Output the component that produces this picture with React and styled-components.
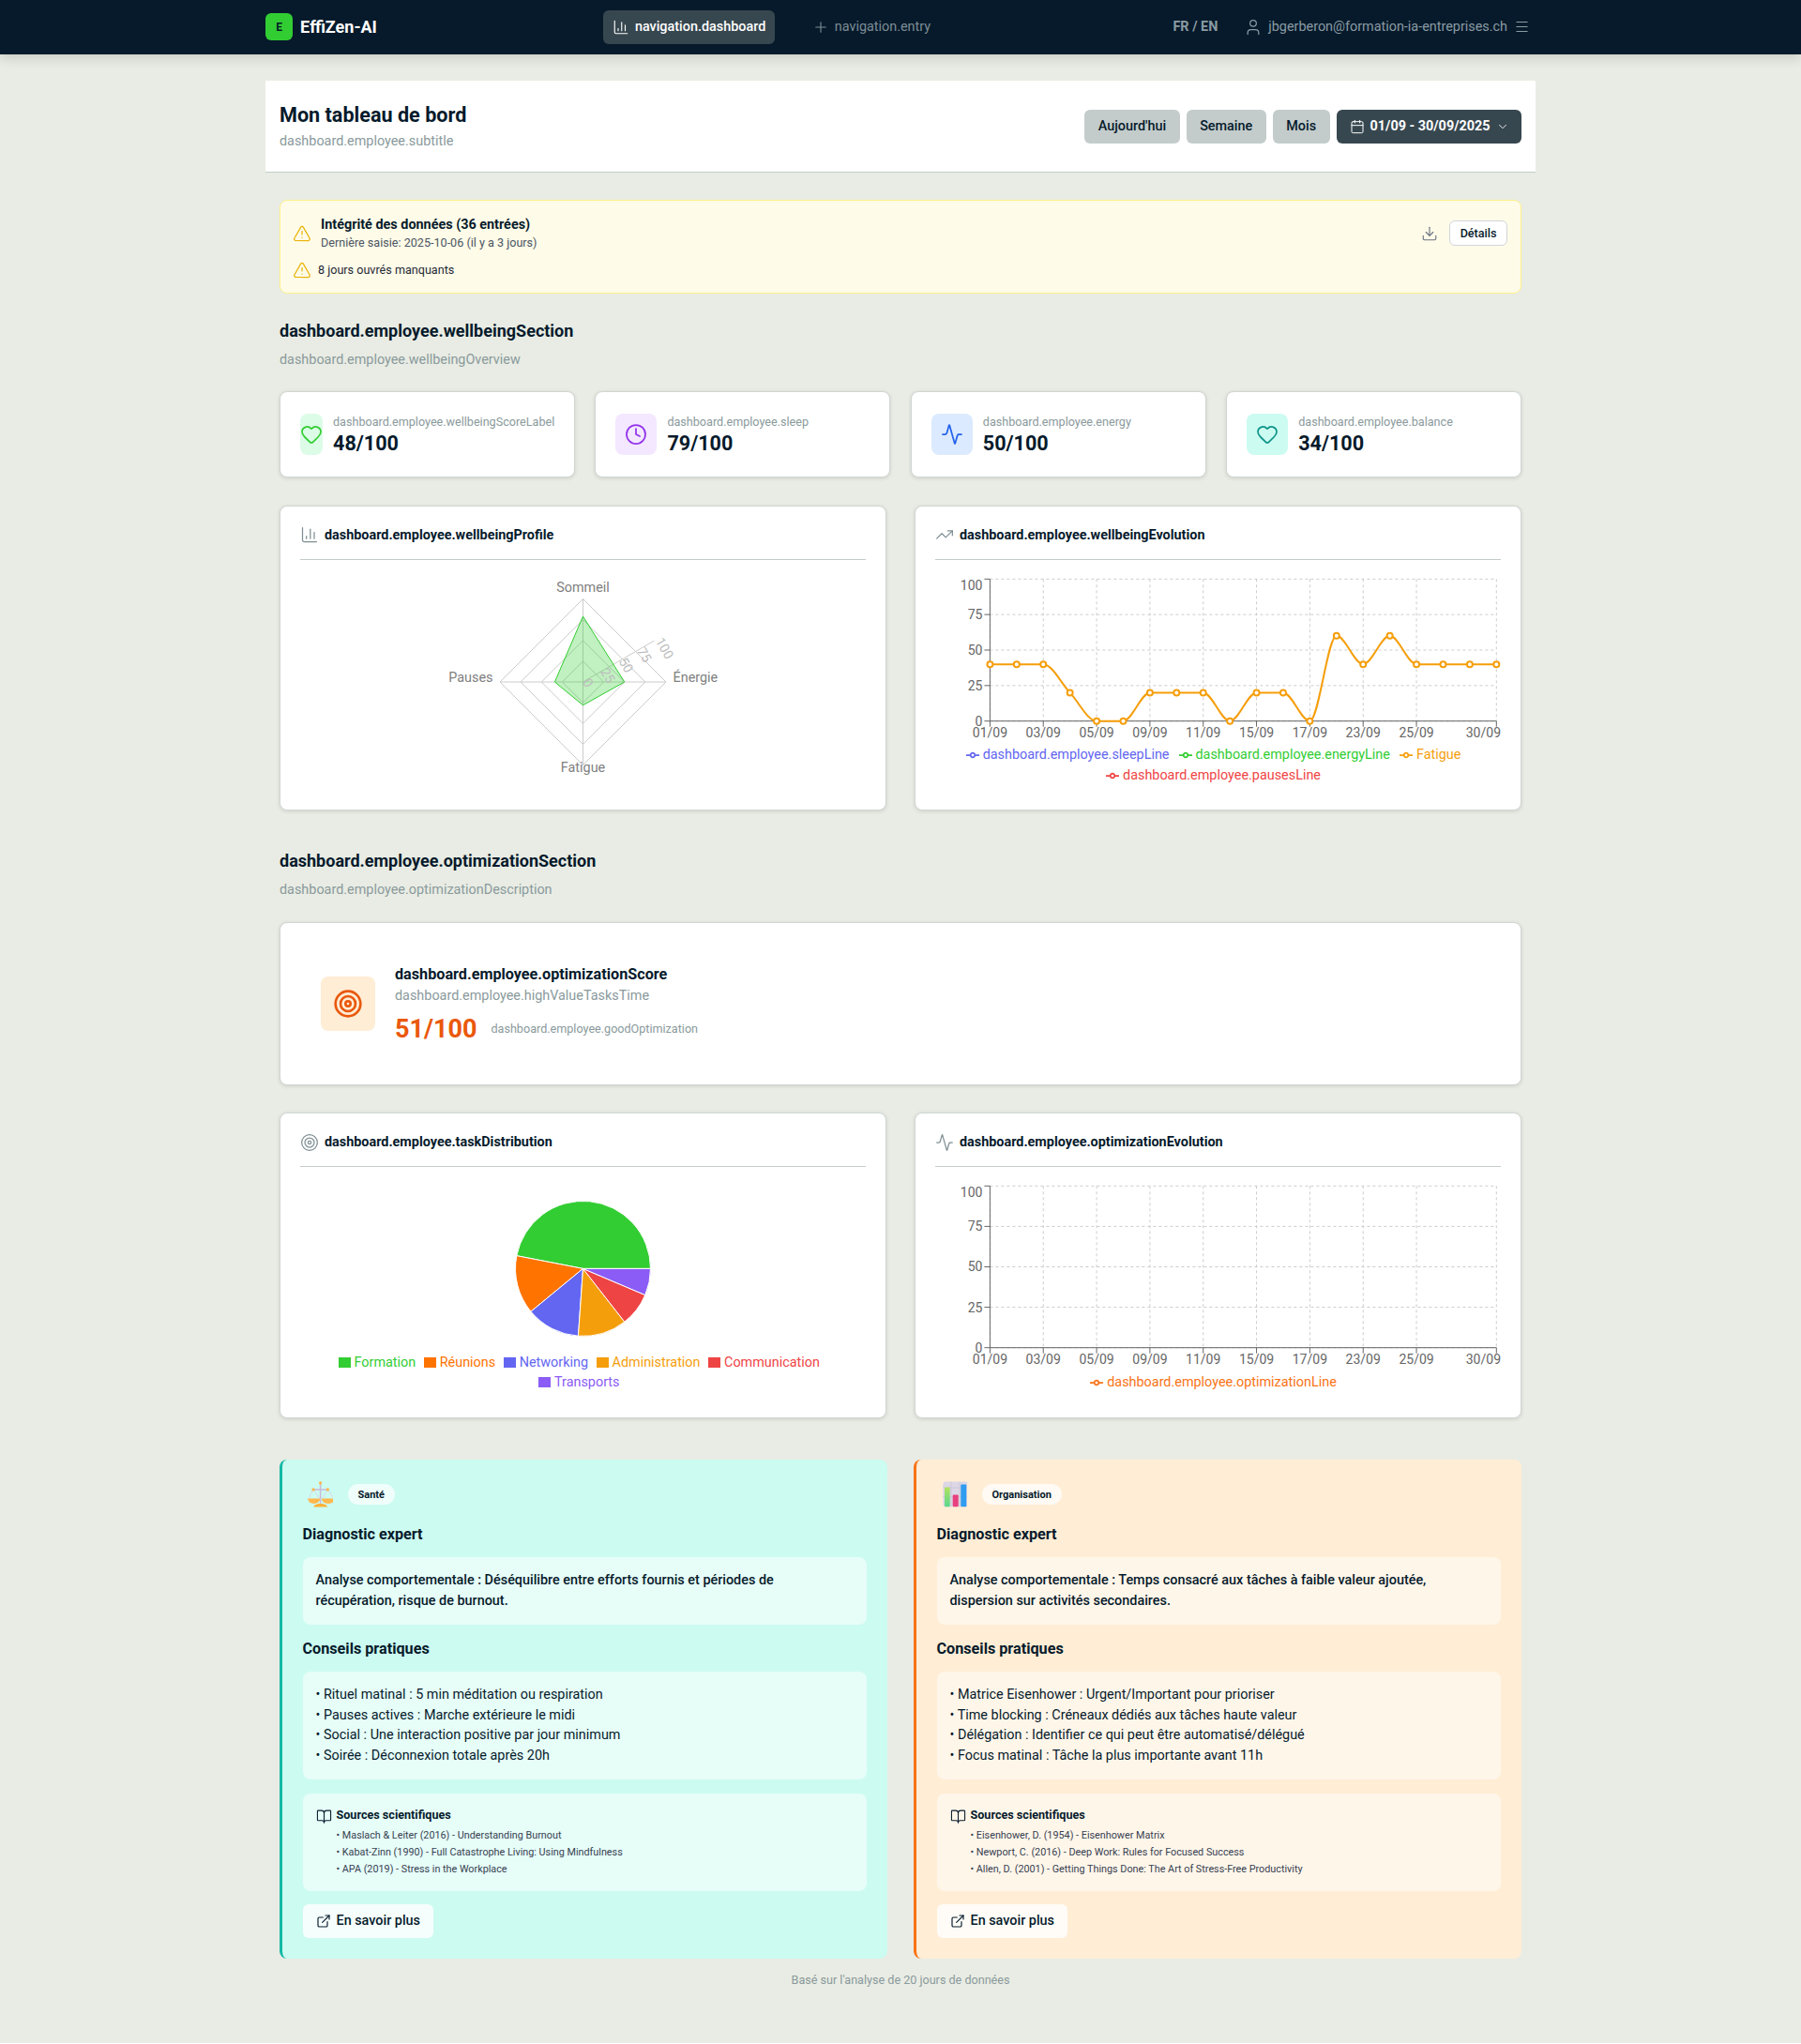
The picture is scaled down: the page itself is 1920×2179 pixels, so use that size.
import React from 'react';
import styled, { createGlobalStyle } from 'styled-components';
import {
  Activity,
  BookOpen,
  Calendar,
  ChartColumn,
  ChevronDown,
  Clock,
  Download,
  ExternalLink,
  Heart,
  Menu,
  Plus,
  Target,
  TrendingUp,
  TriangleAlert,
  User,
} from 'lucide-react';

const ink = '#061a2b';
const muted = '#8a9a9c';
const slate = '#37474f';
const line = '#c3cccb';

const dates = ['01/09', '03/09', '05/09', '09/09', '11/09', '15/09', '17/09', '23/09', '25/09', '30/09'];
const fatigue = [40, 40, 40, 20, 0, 0, 20, 20, 20, 0, 20, 20, 0, 60, 40, 60, 40, 40, 40, 40];

const tasks = [
  { name: 'Formation', color: '#32cd32', from: 0, to: 169 },
  { name: 'Réunions', color: '#ff7300', from: 169, to: 219.5 },
  { name: 'Networking', color: '#6366f1', from: 219.5, to: 266 },
  { name: 'Administration', color: '#f59e0b', from: 266, to: 308 },
  { name: 'Communication', color: '#ef4444', from: 308, to: 337 },
  { name: 'Transports', color: '#8b5cf6', from: 337, to: 360 },
];

const kpis = [
  { label: 'dashboard.employee.wellbeingScoreLabel', value: '48/100', Icon: Heart, bg: '#dcfce7', fg: '#32cd32' },
  { label: 'dashboard.employee.sleep', value: '79/100', Icon: Clock, bg: '#f3e8ff', fg: '#9333ea' },
  { label: 'dashboard.employee.energy', value: '50/100', Icon: Activity, bg: '#dbeafe', fg: '#2563eb' },
  { label: 'dashboard.employee.balance', value: '34/100', Icon: Heart, bg: '#ccfbf1', fg: '#0d9488' },
];

function ScalesGlyph() {
  return (
    <svg width="28" height="28" viewBox="6 5.5 28 28" aria-hidden="true">
      <path d="M20.6 8v22" stroke="#c9bdd9" strokeWidth="1.6" />
      <path d="M13 14.5h15.5" stroke="#c9bdd9" strokeWidth="1.6" />
      <path d="M13 14.5 8 24M13 14.5 19.5 24M28.5 14.5 22.5 24M28.5 14.5 35 24" stroke="#d8cfe3" strokeWidth="0.8" fill="none" />
      <circle cx="20.6" cy="7.4" r="1.6" fill="#fdb64a" />
      <circle cx="13" cy="14.4" r="1.6" fill="#fdb64a" />
      <circle cx="28.4" cy="14.4" r="1.6" fill="#fdb64a" />
      <path d="M7.3 24h12.8c0 3.4-2.8 5.4-6.4 5.4S7.3 27.4 7.3 24Z" fill="#ffb84d" />
      <path d="M22 24h14c0 3.4-3 5.4-7 5.4S22 27.4 22 24Z" fill="#ffb84d" />
      <path d="M13.4 33c0-2.4 3.4-3.6 7.2-3.6s7.4 1.2 7.4 3.6Z" fill="#fdb136" />
    </svg>
  );
}

function BarsGlyph() {
  return (
    <svg width="28" height="28" viewBox="6 5.5 28 28" aria-hidden="true">
      <defs>
        <linearGradient id="bar-green" x1="0" y1="0" x2="0" y2="1">
          <stop offset="0" stopColor="#b3e35f" />
          <stop offset="1" stopColor="#58d68d" />
        </linearGradient>
      </defs>
      <rect x="8.3" y="6" width="26.7" height="26.7" rx="3" fill="#dcd7e6" />
      <path d="M16.9 6v26.7M26 6v26.7M8.3 12.5H35M8.3 22h26.7" stroke="#c9c4d4" strokeWidth="0.8" />
      <rect x="10" y="12" width="5.7" height="20.7" rx="1" fill="url(#bar-green)" />
      <rect x="18.7" y="20" width="6" height="12.7" rx="1" fill="#e93f7f" />
      <rect x="27.3" y="9" width="6" height="23.7" rx="1" fill="#2f9cf0" />
    </svg>
  );
}

const advice = [
  {
    Glyph: ScalesGlyph,
    tag: 'Santé',
    bg: '#ccfbf1',
    accent: '#14b8a6',
    diagnostic: 'Analyse comportementale : Déséquilibre entre efforts fournis et périodes de récupération, risque de burnout.',
    tips: [
      'Rituel matinal : 5 min méditation ou respiration',
      'Pauses actives : Marche extérieure le midi',
      'Social : Une interaction positive par jour minimum',
      'Soirée : Déconnexion totale après 20h',
    ],
    sources: [
      'Maslach & Leiter (2016) - Understanding Burnout',
      'Kabat-Zinn (1990) - Full Catastrophe Living: Using Mindfulness',
      'APA (2019) - Stress in the Workplace',
    ],
  },
  {
    Glyph: BarsGlyph,
    tag: 'Organisation',
    bg: '#ffedd5',
    accent: '#f97316',
    diagnostic: 'Analyse comportementale : Temps consacré aux tâches à faible valeur ajoutée, dispersion sur activités secondaires.',
    tips: [
      'Matrice Eisenhower : Urgent/Important pour prioriser',
      'Time blocking : Créneaux dédiés aux tâches haute valeur',
      'Délégation : Identifier ce qui peut être automatisé/délégué',
      'Focus matinal : Tâche la plus importante avant 11h',
    ],
    sources: [
      'Eisenhower, D. (1954) - Eisenhower Matrix',
      'Newport, C. (2016) - Deep Work: Rules for Focused Success',
      'Allen, D. (2001) - Getting Things Done: The Art of Stress-Free Productivity',
    ],
  },
];

// same curve as d3 curveMonotoneX
function monotonePath(points) {
  const n = points.length;
  const slopes = [];
  const tangents = [];
  for (let i = 0; i < n - 1; i++) {
    slopes.push((points[i + 1][1] - points[i][1]) / (points[i + 1][0] - points[i][0]));
  }
  tangents[0] = slopes[0];
  tangents[n - 1] = slopes[n - 2];
  for (let i = 1; i < n - 1; i++) {
    const a = slopes[i - 1];
    const b = slopes[i];
    tangents[i] = a * b <= 0 ? 0 : (2 * a * b) / (a + b);
  }
  let d = `M${points[0][0]},${points[0][1]}`;
  for (let i = 0; i < n - 1; i++) {
    const h = (points[i + 1][0] - points[i][0]) / 3;
    d += `C${points[i][0] + h},${points[i][1] + h * tangents[i]},${points[i + 1][0] - h},${points[i + 1][1] - h * tangents[i + 1]},${points[i + 1][0]},${points[i + 1][1]}`;
  }
  return d;
}

function LineChart({ height, plotBottom, data, color }) {
  const left = 58.4;
  const right = 598.3;
  const top = 5.3;
  const step = (right - left) / 19;
  const indexes = [0, 2, 4, 6, 8, 10, 12, 14, 16, 19];
  const yOf = (v) => plotBottom - (v / 100) * (plotBottom - top);
  const points = data ? data.map((v, i) => [left + i * step, yOf(v)]) : [];

  return (
    <svg width="603" height={height} style={{ display: 'block' }}>
      <g stroke="#ccc" strokeDasharray="3 3">
        {[0, 25, 50, 75, 100].map((v) => (
          <line key={v} x1={left} x2={right} y1={yOf(v)} y2={yOf(v)} />
        ))}
        {indexes.map((i) => (
          <line key={i} x1={left + i * step} x2={left + i * step} y1={top} y2={plotBottom} />
        ))}
      </g>
      <g stroke="#666">
        <line x1={left} x2={left} y1={top} y2={plotBottom} />
        <line x1={left} x2={right} y1={plotBottom} y2={plotBottom} />
        {[0, 25, 50, 75, 100].map((v) => (
          <line key={v} x1={left - 6} x2={left} y1={yOf(v)} y2={yOf(v)} />
        ))}
        {indexes.map((i) => (
          <line key={i} x1={left + i * step} x2={left + i * step} y1={plotBottom} y2={plotBottom + 6} />
        ))}
      </g>
      <g fill="#666" fontSize="14" fontFamily="Roboto, sans-serif">
        {[0, 25, 50, 75, 100].map((v) => (
          <text key={v} x={left - 8} y={yOf(v) + (v === 100 ? 6.5 : 0)} dy="0.355em" textAnchor="end">
            {v}
          </text>
        ))}
        {indexes.map((i, k) => (
          <text
            key={i}
            x={k === indexes.length - 1 ? 603 : left + i * step}
            y={plotBottom + 12.5}
            dy="0.355em"
            textAnchor={k === indexes.length - 1 ? 'end' : 'middle'}
          >
            {dates[k]}
          </text>
        ))}
      </g>
      {data && (
        <g>
          <path d={monotonePath(points)} fill="none" stroke={color} strokeWidth="2" />
          {points.map(([x, y]) => (
            <circle key={x} cx={x} cy={y} r="3" fill="#fff" stroke={color} strokeWidth="2" />
          ))}
        </g>
      )}
    </svg>
  );
}

function RadarChart() {
  const cx = 301.5;
  const cy = 115;
  const axes = [
    [0, -1],
    [1, 0],
    [0, 1],
    [-1, 0],
  ];
  const poly = (values) => axes.map(([x, y], i) => `${cx + x * values[i]},${cy + y * values[i]}`).join(' ');
  const shape = poly([79 * 0.885, 50 * 0.885, 28 * 0.885, 34 * 0.885]);
  const ticks = [
    { t: 0, x: 307, y: 116 },
    { t: 25, x: 328, y: 108 },
    { t: 50, x: 347.5, y: 97 },
    { t: 75, x: 367, y: 86 },
    { t: 100, x: 388.6, y: 79 },
  ];

  return (
    <svg width="603" height="230" style={{ display: 'block' }}>
      <g fill="none" stroke="#ccc">
        {[22.1, 44.2, 66.4, 88.5].map((r) => (
          <polygon key={r} points={poly([r, r, r, r])} />
        ))}
        {axes.map(([x, y]) => (
          <line key={`${x}${y}`} x1={cx} y1={cy} x2={cx + x * 88.5} y2={cy + y * 88.5} />
        ))}
      </g>
      <line x1={cx} y1={cy} x2={cx + 76} y2={cy - 44} stroke="#ccc" />
      <polygon points={shape} fill="#32cd32" fillOpacity="0.3" stroke="#32cd32" />
      <g fill="#bdbdbd" fontSize="14" fontFamily="Roboto, sans-serif" textAnchor="middle">
        {ticks.map(({ t, x, y }) => (
          <text key={t} x={x} y={y} dy="0.355em" transform={`rotate(60 ${x} ${y})`}>
            {t}
          </text>
        ))}
      </g>
      <g fill="#808080" fontSize="14.4" fontFamily="Roboto, sans-serif">
        <text x={cx} y={cy - 101} dy="0.355em" textAnchor="middle">Sommeil</text>
        <text x={cx + 96} y={cy - 5} dy="0.355em">Énergie</text>
        <text x={cx} y={cy + 91} dy="0.355em" textAnchor="middle">Fatigue</text>
        <text x={cx - 96} y={cy - 5} dy="0.355em" textAnchor="end">Pauses</text>
      </g>
    </svg>
  );
}

function PieChart() {
  const cx = 301.5;
  const cy = 93.4;
  const r = 72;
  const at = (deg) => [cx + r * Math.cos((deg * Math.PI) / 180), cy - r * Math.sin((deg * Math.PI) / 180)];

  return (
    <svg width="603" height="183" style={{ display: 'block' }}>
      {tasks.map((t) => {
        const [x1, y1] = at(t.from);
        const [x2, y2] = at(t.to);
        const large = t.to - t.from > 180 ? 1 : 0;
        return (
          <path
            key={t.name}
            d={`M${cx},${cy}L${x1},${y1}A${r},${r},0,${large},0,${x2},${y2}Z`}
            fill={t.color}
            stroke="#fff"
          />
        );
      })}
    </svg>
  );
}

function LineGlyph({ color }) {
  return (
    <svg width="14" height="14" viewBox="0 0 32 32">
      <path
        d="M0,16h10.67A5.33,5.33,0,1,1,21.33,16H32M21.33,16A5.33,5.33,0,1,1,10.67,16"
        fill="none"
        stroke={color}
        strokeWidth="4"
      />
    </svg>
  );
}

function Legend({ items, square, row }) {
  return (
    <LegendRow $row={row}>
      {items.map((item) => (
        <LegendItem key={item.name} $color={item.color} $square={square}>
          {square ? <LegendSquare $color={item.color} /> : <LineGlyph color={item.color} />}
          {item.name}
        </LegendItem>
      ))}
    </LegendRow>
  );
}

function ChartCard({ Icon, title, children }) {
  return (
    <Card>
      <CardTitle>
        <Icon size={20} color="#7f8f94" strokeWidth={1.5} />
        {title}
      </CardTitle>
      <ChartBody>{children}</ChartBody>
    </Card>
  );
}

export default function App() {
  return (
    <>
      <GlobalStyle />
      <Header>
        <Brand>
          <BrandMark>E</BrandMark>
          EffiZen-AI
        </Brand>
        <Nav>
          <NavItem $active>
            <ChartColumn size={18} strokeWidth={1.5} />
            navigation.dashboard
          </NavItem>
          <NavItem>
            <Plus size={18} strokeWidth={1.5} />
            navigation.entry
          </NavItem>
        </Nav>
        <HeaderRight>
          <Lang>FR / EN</Lang>
          <UserBlock>
            <User size={20} strokeWidth={1.5} />
            jbgerberon@formation-ia-entreprises.ch
          </UserBlock>
          <Menu size={17} color="#8a9ba3" strokeWidth={1.5} />
        </HeaderRight>
      </Header>

      <Page>
        <TitleBar>
          <div>
            <PageTitle>Mon tableau de bord</PageTitle>
            <PageSubtitle>dashboard.employee.subtitle</PageSubtitle>
          </div>
          <PeriodGroup>
            <PeriodButton>Aujourd'hui</PeriodButton>
            <PeriodButton>Semaine</PeriodButton>
            <PeriodButton>Mois</PeriodButton>
            <DateButton>
              <Calendar size={16} strokeWidth={1.5} />
              <span>01/09 - 30/09/2025</span>
              <ChevronDown size={14} strokeWidth={1.5} />
            </DateButton>
          </PeriodGroup>
        </TitleBar>

        <Content>
          <Alert>
            <AlertMain>
              <AlertHead>
                <TriangleAlert size={20} color="#eab308" strokeWidth={1.5} />
                <div>
                  <AlertTitle>Intégrité des données (36 entrées)</AlertTitle>
                  <AlertMeta>Dernière saisie: 2025-10-06 (il y a 3 jours)</AlertMeta>
                </div>
              </AlertHead>
              <AlertRow>
                <TriangleAlert size={20} color="#eab308" strokeWidth={1.5} />
                8 jours ouvrés manquants
              </AlertRow>
            </AlertMain>
            <AlertActions>
              <Download size={18} color="#6b7280" strokeWidth={1.5} />
              <DetailsButton>Détails</DetailsButton>
            </AlertActions>
          </Alert>

          <SectionTitle $top={26}>dashboard.employee.wellbeingSection</SectionTitle>
          <SectionText>dashboard.employee.wellbeingOverview</SectionText>

          <KpiGrid>
            {kpis.map(({ label, value, Icon, bg, fg }) => (
              <KpiCard key={label}>
                <KpiIcon $bg={bg}>
                  <Icon size={24} color={fg} strokeWidth={1.75} />
                </KpiIcon>
                <KpiBody>
                  <KpiLabel>{label}</KpiLabel>
                  <KpiValue>{value}</KpiValue>
                </KpiBody>
              </KpiCard>
            ))}
          </KpiGrid>

          <ChartGrid $top={30}>
            <ChartCard Icon={ChartColumn} title="dashboard.employee.wellbeingProfile">
              <RadarChart />
            </ChartCard>
            <ChartCard Icon={TrendingUp} title="dashboard.employee.wellbeingEvolution">
              <LineChart height={182} plotBottom={156.7} data={fatigue} color="#f59e0b" />
              <Legend
                row={22}
                items={[
                  { name: 'dashboard.employee.sleepLine', color: '#6366f1' },
                  { name: 'dashboard.employee.energyLine', color: '#32cd32' },
                  { name: 'Fatigue', color: '#f59e0b' },
                  { name: 'dashboard.employee.pausesLine', color: '#ef4444' },
                ]}
              />
            </ChartCard>
          </ChartGrid>

          <SectionTitle $top={39.5}>dashboard.employee.optimizationSection</SectionTitle>
          <SectionText>dashboard.employee.optimizationDescription</SectionText>

          <ScoreCard>
            <ScoreIcon>
              <Target size={32} color="#ea580c" strokeWidth={2} />
            </ScoreIcon>
            <ScoreBody>
              <ScoreTitle>dashboard.employee.optimizationScore</ScoreTitle>
              <ScoreText>dashboard.employee.highValueTasksTime</ScoreText>
              <ScoreLine>
                <ScoreValue>51/100</ScoreValue>
                <ScoreNote>dashboard.employee.goodOptimization</ScoreNote>
              </ScoreLine>
            </ScoreBody>
          </ScoreCard>

          <ChartGrid $top={29.5}>
            <ChartCard Icon={Target} title="dashboard.employee.taskDistribution">
              <PieChart />
              <Legend square row={21} items={tasks} />
            </ChartCard>
            <ChartCard Icon={Activity} title="dashboard.employee.optimizationEvolution">
              <LineChart height={204} plotBottom={177.7} />
              <Legend row={22} items={[{ name: 'dashboard.employee.optimizationLine', color: '#f97316' }]} />
            </ChartCard>
          </ChartGrid>

          <AdviceGrid>
            {advice.map(({ Glyph, tag, bg, accent, diagnostic, tips, sources }) => (
              <AdviceCard key={tag} $bg={bg} $accent={accent}>
                <AdviceTop>
                  <Glyph />
                  <Tag>{tag}</Tag>
                </AdviceTop>
                <AdviceHeading>Diagnostic expert</AdviceHeading>
                <DiagnosticBox>{diagnostic}</DiagnosticBox>
                <AdviceHeading $top={14}>Conseils pratiques</AdviceHeading>
                <TipsBox>
                  {tips.map((tip) => (
                    <div key={tip}>• {tip}</div>
                  ))}
                </TipsBox>
                <SourcesBox>
                  <BookOpen size={17} color={ink} strokeWidth={1.5} />
                  <div>
                    <SourcesTitle>Sources scientifiques</SourcesTitle>
                    {sources.map((s) => (
                      <SourceItem key={s}>• {s}</SourceItem>
                    ))}
                  </div>
                </SourcesBox>
                <MoreButton>
                  <ExternalLink size={16} strokeWidth={1.75} />
                  En savoir plus
                </MoreButton>
              </AdviceCard>
            ))}
          </AdviceGrid>

          <Footnote>Basé sur l'analyse de 20 jours de données</Footnote>
        </Content>
      </Page>
    </>
  );
}

const GlobalStyle = createGlobalStyle`
  * {
    box-sizing: border-box;
  }

  html {
    background: #fff;
  }

  body {
    margin: 0;
    background: #e9ece4;
    color: ${ink};
    font-family: Roboto, 'Noto Sans', sans-serif;
    font-size: 14.4px;
  }
`;

const Header = styled.header`
  height: 58px;
  padding: 0 289px 1px 283px;
  display: flex;
  align-items: center;
  background: ${ink};
  box-shadow: 0 4px 12px rgba(0, 0, 0, 0.14);
  position: relative;
`;

const Brand = styled.div`
  display: flex;
  align-items: center;
  gap: 8px;
  color: #fff;
  font-size: 18px;
  font-weight: 700;
`;

const BrandMark = styled.div`
  width: 29px;
  height: 29px;
  border-radius: 6px;
  display: flex;
  align-items: center;
  justify-content: center;
  background: #32cd32;
  color: ${ink};
  font-size: 12px;
  font-weight: 700;
`;

const Nav = styled.nav`
  margin-left: 241.5px;
  display: flex;
  align-items: center;
  gap: 40px;
`;

const NavItem = styled.div`
  height: 36px;
  padding: 0 ${(p) => (p.$active ? '9.5px' : '0')};
  display: flex;
  align-items: center;
  gap: 6px;
  border-radius: 6px;
  background: ${(p) => (p.$active ? slate : 'transparent')};
  color: ${(p) => (p.$active ? '#fff' : '#7d8d95')};
  font-weight: ${(p) => (p.$active ? 500 : 400)};
`;

const HeaderRight = styled.div`
  margin-left: auto;
  display: flex;
  align-items: center;
  color: #8a9ba3;
`;

const Lang = styled.div`
  font-weight: 700;
  margin-right: 28px;
`;

const UserBlock = styled.div`
  display: flex;
  align-items: center;
  gap: 6px;
  margin-right: 7px;
`;

const Page = styled.main`
  width: 1354px;
  margin-left: 283px;
  padding-top: 28px;
  height: 2120px;
`;

const TitleBar = styled.section`
  height: 98px;
  padding: 0 15px;
  display: flex;
  align-items: center;
  justify-content: space-between;
  background: #fff;
  border-bottom: 1px solid ${line};
`;

const PageTitle = styled.h1`
  margin: 0;
  font-size: 21.6px;
  line-height: 30px;
  font-weight: 700;
  color: ${ink};
`;

const PageSubtitle = styled.p`
  margin: 3px 0 0;
  color: ${muted};
  line-height: 20px;
`;

const PeriodGroup = styled.div`
  display: flex;
  gap: 7px;
`;

const PeriodButton = styled.button`
  height: 36px;
  padding: 0 14.5px;
  border: 0;
  border-radius: 6px;
  background: ${line};
  color: ${ink};
  font: 500 14.4px Roboto, sans-serif;
`;

const DateButton = styled(PeriodButton)`
  padding: 0 13.5px 0 14px;
  display: flex;
  align-items: center;
  gap: 6px;
  background: ${slate};
  color: #fff;
  font-weight: 700;
`;

const Content = styled.div`
  padding: 29px 15px 0;
`;

const Alert = styled.section`
  height: 99.5px;
  padding: 16px 14px 14px 13px;
  display: flex;
  justify-content: space-between;
  background: #fefbe8;
  border: 1px solid #fef08a;
  border-radius: 8px;
`;

const AlertMain = styled.div`
  display: flex;
  flex-direction: column;
  gap: 9.5px;
`;

const AlertHead = styled.div`
  display: flex;
  align-items: center;
  gap: 10px;
`;

const AlertTitle = styled.div`
  font-weight: 700;
  line-height: 20px;
`;

const AlertMeta = styled.div`
  font-size: 12.6px;
  line-height: 18px;
  color: #4b5563;
`;

const AlertRow = styled.div`
  display: flex;
  align-items: center;
  gap: 7px;
  font-size: 12.6px;
  color: #1f2937;
`;

const AlertActions = styled.div`
  height: 37px;
  display: flex;
  align-items: center;
  gap: 12px;
`;

const DetailsButton = styled.button`
  height: 27px;
  padding: 0 10.5px;
  background: #fff;
  border: 1px solid #d1d5db;
  border-radius: 6px;
  color: ${ink};
  font: 500 12.6px Roboto, sans-serif;
`;

const SectionTitle = styled.h2`
  margin: ${(p) => p.$top}px 0 0;
  font-size: 18px;
  line-height: 28px;
  font-weight: 700;
  color: ${ink};
`;

const SectionText = styled.p`
  margin: 7.5px 0 0;
  line-height: 20px;
  color: ${muted};
`;

const KpiGrid = styled.div`
  margin-top: 23px;
  display: grid;
  grid-template-columns: repeat(4, minmax(0, 1fr));
  gap: 21.6px;
`;

const Card = styled.div`
  padding: 21px;
  background: #fff;
  border: 1px solid #cfd6d3;
  border-radius: 8px;
  box-shadow: 0 1px 4px rgba(0, 0, 0, 0.12);
`;

const KpiCard = styled(Card)`
  height: 91.5px;
  padding: 22px 21px;
  display: flex;
  align-items: center;
  gap: 11px;
`;

const KpiIcon = styled.div`
  width: 44px;
  height: 44px;
  display: flex;
  align-items: center;
  justify-content: center;
  border-radius: 8px;
  background: ${(p) => p.$bg};

  svg {
    flex-shrink: 0;
  }
`;

const KpiBody = styled.div`
  padding-top: 4px;
`;

const KpiLabel = styled.div`
  font-size: 12.6px;
  line-height: 16px;
  color: ${muted};
`;

const KpiValue = styled.div`
  font-size: 21.6px;
  line-height: 30px;
  font-weight: 700;
  color: ${ink};
`;

const ChartGrid = styled.div`
  margin-top: ${(p) => p.$top}px;
  display: grid;
  grid-template-columns: 647px 647px;
  gap: 30px;

  ${Card} {
    height: 325.5px;
  }
`;

const CardTitle = styled.div`
  height: 36px;
  padding-bottom: 16px;
  display: flex;
  align-items: center;
  gap: 6px;
  border-bottom: 1px solid ${line};
  font-weight: 700;
  color: ${ink};
`;

const ChartBody = styled.div`
  margin-top: 15px;
`;

const LegendRow = styled.div`
  display: flex;
  flex-wrap: wrap;
  justify-content: center;
  line-height: ${(p) => p.$row}px;
`;

const LegendItem = styled.div`
  margin-right: ${(p) => (p.$square ? '8.5px' : '10px')};
  display: flex;
  align-items: center;
  gap: 4px;
  color: ${(p) => p.$color};
`;

const LegendSquare = styled.span`
  width: 13px;
  height: 11px;
  background: ${(p) => p.$color};
`;

const ScoreCard = styled(Card)`
  margin-top: 23.5px;
  height: 174px;
  padding: 0 43px;
  display: flex;
  align-items: center;
  gap: 21px;
`;

const ScoreIcon = styled.div`
  width: 58px;
  height: 58px;
  display: flex;
  align-items: center;
  justify-content: center;
  border-radius: 8px;
  background: #ffedd5;
`;

const ScoreBody = styled.div`
  padding-top: 5px;
`;

const ScoreTitle = styled.div`
  font-size: 16.2px;
  line-height: 22px;
  font-weight: 700;
  color: ${ink};
`;

const ScoreText = styled.div`
  margin-top: 2px;
  line-height: 20px;
  color: ${muted};
`;

const ScoreLine = styled.div`
  margin-top: 6px;
  display: flex;
  align-items: center;
  gap: 15px;
`;

const ScoreValue = styled.div`
  font-size: 27px;
  line-height: 38px;
  font-weight: 700;
  color: #ea580c;
`;

const ScoreNote = styled.div`
  margin-bottom: 2px;
  font-size: 12.6px;
  color: ${muted};
`;

const AdviceGrid = styled.div`
  margin-top: 44px;
  display: grid;
  grid-template-columns: 648px 648px;
  gap: 28px;
`;

const AdviceCard = styled.article`
  height: 532px;
  padding: 21.5px 22px 22px 21.5px;
  background: ${(p) => p.$bg};
  border-left: 3px solid ${(p) => p.$accent};
  border-radius: 8px;
`;

const AdviceTop = styled.div`
  height: 32px;
  padding-left: 4px;
  display: flex;
  align-items: center;
  gap: 16px;
`;

const Tag = styled.span`
  height: 22px;
  padding: 0 11px;
  display: flex;
  align-items: center;
  border-radius: 11px;
  background: rgba(255, 255, 255, 0.7);
  font-size: 11px;
  font-weight: 700;
  color: ${ink};
`;

const AdviceHeading = styled.h3`
  margin: ${(p) => p.$top || 15}px 0 12px;
  font-size: 16.2px;
  line-height: 24px;
  font-weight: 700;
  color: ${ink};
`;

const InnerBox = styled.div`
  padding: 14px;
  border-radius: 8px;
  background: rgba(255, 255, 255, 0.5);
  color: ${ink};
`;

const DiagnosticBox = styled(InnerBox)`
  line-height: 22px;
  font-weight: 500;
`;

const TipsBox = styled(InnerBox)`
  line-height: 21.7px;
`;

const SourcesBox = styled(InnerBox)`
  margin-top: 15px;
  display: flex;
  gap: 5px;

  svg {
    margin-top: 2px;
    flex-shrink: 0;
  }
`;

const SourcesTitle = styled.div`
  margin-bottom: 4px;
  font-size: 12.6px;
  line-height: 18px;
  font-weight: 700;
`;

const SourceItem = styled.div`
  font-size: 10.8px;
  line-height: 18px;
  color: #374151;
`;

const MoreButton = styled.button`
  margin-top: 14px;
  height: 36px;
  padding: 0 14px;
  display: flex;
  align-items: center;
  gap: 6px;
  border: 0;
  border-radius: 6px;
  background: rgba(255, 255, 255, 0.8);
  color: ${ink};
  font: 500 14.4px Roboto, sans-serif;
`;

const Footnote = styled.p`
  margin: 14px 0 0;
  text-align: center;
  font-size: 12.6px;
  line-height: 18px;
  color: ${muted};
`;
